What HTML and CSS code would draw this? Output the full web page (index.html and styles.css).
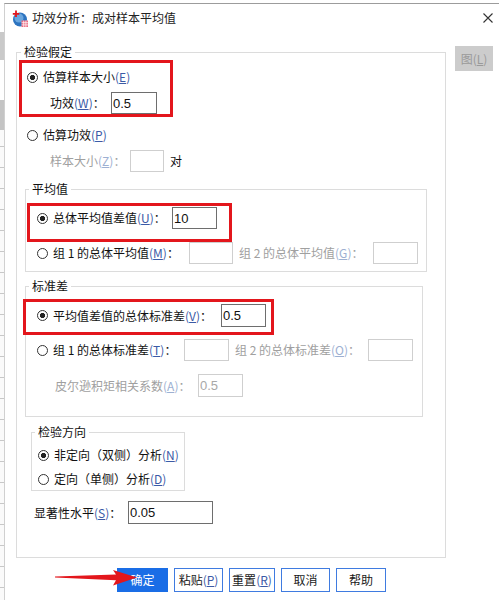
FILE: index.html
```html
<!DOCTYPE html>
<html lang="zh-CN">

<head>
    <meta charset="UTF-8">
    <title>功效分析：成对样本平均值</title>
    <link rel="stylesheet" href="styles.css">
</head>

<body>
    <div id="behind"></div>

    <div id="dialog">
        <div id="titleBar">
            <svg class="app-icon" width="16" height="17" viewBox="0 0 16 17">
                <circle cx="8" cy="9.5" r="7" fill="#2d74c0" />
                <circle cx="7" cy="8" r="4.5" fill="#6aa6de" />
                <rect x="9.5" y="10.5" width="6.5" height="6.5" fill="#ec6a80" />
                <path d="M9.5 12.7h6.5M9.5 14.9h6.5M11.7 10.5v6.5M13.9 10.5v6.5" stroke="#fff" stroke-width="0.7" />
                <path d="M4 0.5v6.5M0.8 3.8h6.5" stroke="#e3161c" stroke-width="1.8" />
            </svg>
            <span class="title">功效分析：成对样本平均值</span>
            <svg class="close" width="10" height="10" viewBox="0 0 10 10">
                <path d="M0.5 0.5l9 9M9.5 0.5l-9 9" stroke="#333" stroke-width="1.1" />
            </svg>
        </div>

        <div id="dialogBody">
            <div id="mainColumn">
                <fieldset id="hypothesis">
                    <legend>检验假定</legend>

                    <div class="mark mark-estimate">
                        <div class="option">
                            <span class="radio checked"></span>
                            <span>估算样本大小<span class="key">(<u>E</u>)</span></span>
                        </div>
                        <div class="field power-field">
                            <label class="lbl-power">功效<span class="key">(<u>W</u>)</span>：</label>
                            <input type="text" class="num num-power" value="0.5">
                        </div>
                    </div>

                    <div class="option option-power">
                        <span class="radio"></span>
                        <span>估算功效<span class="key">(<u>P</u>)</span></span>
                    </div>
                    <div class="field size-field">
                        <label class="lbl-size off">样本大小<span class="key">(<u>Z</u>)</span>：</label>
                        <input type="text" class="num num-size" disabled>
                        <span class="unit">对</span>
                    </div>

                    <fieldset id="meanGroup">
                        <legend>平均值</legend>
                        <div class="mark mark-diff">
                            <div class="option field">
                                <span class="radio checked"></span>
                                <label class="lbl-diff">总体平均值差值<span class="key">(<u>U</u>)</span>：</label>
                                <input type="text" class="num" value="10">
                            </div>
                        </div>
                        <div class="option field row-groups">
                            <span class="radio"></span>
                            <label class="lbl-mean1">组 1 的总体平均值<span class="key">(<u>M</u>)</span>：</label>
                            <input type="text" class="num num-narrow" disabled>
                            <label class="lbl-mean2 off">组 2 的总体平均值<span class="key">(<u>G</u>)</span>：</label>
                            <input type="text" class="num" disabled>
                        </div>
                    </fieldset>

                    <fieldset id="sdGroup">
                        <legend>标准差</legend>
                        <div class="mark mark-sd">
                            <div class="option field">
                                <span class="radio checked"></span>
                                <label class="lbl-sd">平均值差值的总体标准差<span class="key">(<u>V</u>)</span>：</label>
                                <input type="text" class="num num-tall" value="0.5">
                            </div>
                        </div>
                        <div class="option field row-sd-groups">
                            <span class="radio"></span>
                            <label class="lbl-sd1">组 1 的总体标准差<span class="key">(<u>T</u>)</span>：</label>
                            <input type="text" class="num" disabled>
                            <label class="lbl-sd2 off">组 2 的总体标准差<span class="key">(<u>O</u>)</span>：</label>
                            <input type="text" class="num" disabled>
                        </div>
                        <div class="field corr-field">
                            <label class="lbl-corr off">皮尔逊积矩相关系数<span class="key">(<u>A</u>)</span>：</label>
                            <input type="text" class="num num-tall" value="0.5" disabled>
                        </div>
                    </fieldset>

                    <fieldset id="directionGroup">
                        <legend>检验方向</legend>
                        <div class="option">
                            <span class="radio checked"></span>
                            <span>非定向（双侧）分析<span class="key">(<u>N</u>)</span></span>
                        </div>
                        <div class="option option-second">
                            <span class="radio"></span>
                            <span>定向（单侧）分析<span class="key">(<u>D</u>)</span></span>
                        </div>
                    </fieldset>

                    <div class="field alpha-field">
                        <label class="lbl-alpha">显著性水平<span class="key">(<u>S</u>)</span>：</label>
                        <input type="text" class="num num-alpha" value="0.05">
                    </div>
                </fieldset>

                <div id="buttonRow">
                    <button class="btn btn-ok">确定</button>
                    <button class="btn btn-paste">粘贴<span class="key">(<u>P</u>)</span></button>
                    <button class="btn btn-reset">重置<span class="key">(<u>R</u>)</span></button>
                    <button class="btn btn-cancel">取消</button>
                    <button class="btn btn-help">帮助</button>
                </div>
            </div>

            <div id="sideColumn">
                <button class="btn-chart">图(<u>L</u>)</button>
            </div>
        </div>
    </div>

    <svg id="arrow" width="90" height="20" viewBox="0 0 90 20">
        <polygon points="5,9.6 66,7.6 63,3 87,10.5 63,18.5 66,13.2 5,10.4" fill="#e3161c" />
    </svg>
</body>

</html>
```

FILE: styles.css
```css
* {
    margin: 0;
    padding: 0;
    box-sizing: border-box;
}

body {
    position: relative;
    width: 499px;
    height: 600px;
    overflow: hidden;
    display: flex;
    background: #fff;
    color: #111;
    font-family: "Noto Sans CJK SC", "Noto Sans", sans-serif;
    font-size: 12px;
    line-height: 16px;
}

#behind {
    width: 4px;
    flex-shrink: 0;
    background:
        linear-gradient(#fff 0 32px, #c9c9c9 32px 60px, #fff 60px 100px, #c4c4c4 100px 130px, transparent 130px),
        repeating-linear-gradient(#fafafa 0 20px, #c8c8c8 20px 21px);
}

#dialog {
    flex: 1;
    margin-top: 3px;
    border-top: 1px solid #9c9c9c;
    border-left: 1px solid #d0d0d0;
    background: #fff;
}

#titleBar {
    height: 28px;
    display: flex;
    align-items: center;
    padding-left: 7px;
}

.app-icon {
    margin-right: 4px;
}

.title {
    font-size: 12px;
    color: #222;
}

.close {
    margin-left: auto;
    margin-right: 6px;
}

#dialogBody {
    display: flex;
    padding: 12px 0 0 11px;
}

#mainColumn {
    width: 430px;
}

#sideColumn {
    margin-left: 9px;
    padding-top: 2px;
}

.btn-chart {
    width: 38px;
    height: 25px;
    border: none;
    background: #cccccc;
    color: #9a9a9a;
    font-family: "Noto Sans CJK SC", sans-serif;
    font-size: 12px;
}

fieldset {
    min-width: 0;
    border: 1px solid #dcdcdc;
}

legend {
    padding: 0 3px;
    line-height: 16px;
}

#hypothesis {
    width: 430px;
    padding: 0 0 33px 0;
}

#hypothesis > legend {
    margin-left: 4px;
}

.mark {
    border: 3px solid #e3161c;
}

.option {
    display: flex;
    align-items: center;
    height: 20px;
}

.radio {
    width: 11px;
    height: 11px;
    border: 1px solid #333;
    border-radius: 50%;
    margin-right: 5px;
    flex-shrink: 0;
}

.radio.checked {
    background: radial-gradient(circle, #222 0 2.4px, transparent 2.9px);
}

.field {
    display: flex;
    align-items: center;
    height: 22px;
}

.field label {
    flex-shrink: 0;
    white-space: nowrap;
}

.key {
    color: #3b5aa6;
}

.key u {
    text-underline-offset: 1px;
}

.off {
    color: #a0a0a0;
}

.off .key {
    color: #9db0d2;
}

.num {
    width: 45px;
    height: 22px;
    border: 1px solid #6e6e6e;
    padding-left: 1px;
    font-family: "Liberation Sans", Arial, sans-serif;
    font-size: 13px;
    color: #111;
    background: #fff;
    outline: none;
}

.num:disabled {
    border-color: #cfcfcf;
    color: #a8a8a8;
    background: #fff;
}

.num-tall {
    height: 23px;
}

/* 检验假定 */
.mark-estimate {
    margin-left: 2px;
    width: 154px;
    height: 57px;
    padding-top: 4px;
}

.mark-estimate .option {
    padding-left: 5px;
}

.power-field {
    margin-top: 5px;
    padding-left: 28px;
}

.lbl-power {
    width: 61px;
}

.num-power {
    width: 46px;
}

.option-power {
    margin-top: 8px;
    padding-left: 10px;
}

.size-field {
    margin-top: 5px;
    padding-left: 33px;
}

.lbl-size {
    width: 80px;
}

.num-size {
    width: 34px;
}

.unit {
    margin-left: 6px;
}

/* 平均值 */
#meanGroup {
    margin: 9px 0 0 8px;
    width: 402px;
    padding: 0 0 7px 0;
}

#meanGroup > legend,
#sdGroup > legend,
#directionGroup > legend {
    margin-left: 3px;
}

.mark-diff {
    margin: 6px 0 0 1px;
    width: 205px;
    height: 39px;
    padding-top: 1px;
}

.mark-diff .option {
    padding-left: 7px;
}

.lbl-diff {
    width: 119px;
}

.row-groups {
    padding-left: 11px;
}

.lbl-mean1 {
    width: 136px;
}

.num-narrow {
    width: 44px;
}

.lbl-mean2 {
    margin-left: 6px;
    width: 134px;
}

/* 标准差 */
#sdGroup {
    margin: 6px 0 0 8px;
    width: 398px;
    padding: 0 0 19px 0;
}

.mark-sd {
    margin: 5px 0 0 -3px;
    width: 251px;
    height: 36px;
    padding-top: 2px;
}

.mark-sd .field {
    height: 23px;
    padding-left: 11px;
}

.lbl-sd {
    width: 168px;
}

.row-sd-groups {
    margin-top: 4px;
    padding-left: 11px;
}

.lbl-sd1 {
    width: 131px;
}

.lbl-sd2 {
    margin-left: 6px;
    width: 133px;
}

.corr-field {
    margin-top: 13px;
    height: 23px;
    padding-left: 29px;
}

.lbl-corr {
    width: 143px;
}

/* 检验方向 */
#directionGroup {
    margin: 7px 0 0 14px;
    width: 154px;
    padding: 5px 0 1px 0;
}

#directionGroup .option {
    padding-left: 6px;
}

#directionGroup .option-second {
    margin-top: 4px;
}

.alpha-field {
    margin-top: 10px;
    height: 23px;
    padding-left: 17px;
}

.lbl-alpha {
    width: 94px;
}

.num-alpha {
    width: 85px;
    height: 23px;
}

/* buttons */
#buttonRow {
    display: flex;
    gap: 6px;
    margin-top: 10px;
    padding-left: 101px;
}

.btn {
    height: 24px;
    border: 1px solid #3f7be0;
    background: #fff;
    color: #1a1a1a;
    font-family: "Noto Sans CJK SC", sans-serif;
    font-size: 12px;
    line-height: 16px;
}

.btn-ok {
    width: 51px;
    background: #1a6de6;
    border-color: #1a6de6;
    color: #fff;
}

.btn-paste {
    width: 49px;
}

.btn-reset {
    width: 46px;
}

.btn-cancel {
    width: 49px;
}

.btn-help {
    width: 50px;
}

#arrow {
    position: absolute;
    left: 50px;
    top: 567px;
}
```
